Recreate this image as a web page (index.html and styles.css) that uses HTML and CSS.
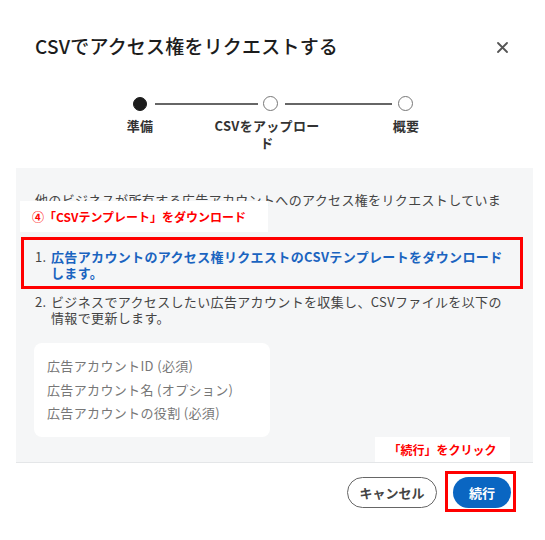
FILE: index.html
```html
<!DOCTYPE html>
<html lang="ja">
  <head>
    <meta charset="UTF-8" />
    <meta name="viewport" content="width=device-width, initial-scale=1.0" />
    <title>CSVでアクセス権をリクエストする</title>
    <link rel="stylesheet" href="styles.css">
  </head>
  <body>
    <div class="modal">
      <header>
        <h1>CSVでアクセス権をリクエストする</h1>
        <button class="close" title="閉じる">
          <svg width="11" height="11" viewBox="0 0 11 11" fill="none" stroke="currentColor" stroke-width="1.8" stroke-linecap="round">
            <path d="M1 1l9 9M10 1l-9 9" />
          </svg>
        </button>
      </header>

      <div class="stepper">
        <div class="track">
          <span class="step-dot active"></span>
          <span class="step-line line-1"></span>
          <span class="step-dot"></span>
          <span class="step-line line-2"></span>
          <span class="step-dot"></span>
        </div>
        <div class="labels">
          <span>準備</span>
          <span>CSVをアップロー<br>ド</span>
          <span>概要</span>
        </div>
      </div>

      <div class="panel">
        <p class="intro">
          他のビジネスが所有する広告アカウントへのアクセス権をリクエストしていま<br>す。次の手順から開始します。
        </p>
        <ol class="steps">
          <li>
            <span class="num">1.</span>
            <a href="#" class="link">広告アカウントのアクセス権リクエストのCSVテンプレートをダウンロード<br>します。</a>
          </li>
          <li>
            <span class="num">2.</span>
            <span>ビジネスでアクセスしたい広告アカウントを収集し、CSVファイルを以下の<br>情報で更新します。</span>
          </li>
        </ol>
        <div class="fields">
          <p>広告アカウントID (必須)</p>
          <p>広告アカウント名 (オプション)</p>
          <p>広告アカウントの役割 (必須)</p>
        </div>
      </div>

      <footer>
        <button class="btn btn-outline">キャンセル</button>
        <button class="btn btn-primary">続行</button>
      </footer>

      <!-- annotations -->
      <div class="note note-1">④「CSVテンプレート」をダウンロード</div>
      <div class="frame frame-1"></div>
      <div class="note note-2">「続行」をクリック</div>
      <div class="frame frame-2"></div>
    </div>
  </body>
</html>
```

FILE: styles.css
```css
* {
  margin: 0;
  padding: 0;
  box-sizing: border-box;
}

body {
  font-family: "Noto Sans CJK JP", "Noto Sans", sans-serif;
  background-color: #fff;
  color: #1c1e21;
  width: 545px;
  height: 540px;
  overflow: hidden;
}

.modal {
  position: relative;
  width: 545px;
  height: 540px;
  padding-top: 34px;
}

header {
  display: flex;
  justify-content: space-between;
  align-items: center;
  padding: 0 36px 0 35px;
}

h1 {
  font-size: 19px;
  line-height: 24px;
  font-weight: 500;
  letter-spacing: 0.2px;
  color: #1c1c1c;
}

.close {
  background: none;
  border: none;
  color: #555;
  width: 12px;
  height: 12px;
  display: flex;
  margin-top: 4px;
}

/* stepper */
.stepper {
  margin-top: 38px;
}

.track {
  display: flex;
  align-items: center;
  padding-left: 133px;
  height: 15px;
}

.step-dot {
  width: 15px;
  height: 15px;
  border-radius: 50%;
  border: 1.5px solid #777;
  background: #fff;
  flex-shrink: 0;
}

.step-dot.active {
  background: #1c1c1c;
  border-color: #1c1c1c;
  width: 14px;
  height: 14px;
}

.step-line {
  height: 2px;
  background: #666;
}

.line-1 {
  width: 103px;
  margin: 0 5px 0 8px;
}

.line-2 {
  width: 107px;
  margin: 0 6px 0 7px;
}

.labels {
  display: grid;
  grid-template-columns: 110px 110px 110px;
  column-gap: 23px;
  padding-left: 85px;
  margin-top: 6px;
  font-size: 13px;
  line-height: 17px;
  font-weight: 700;
  letter-spacing: 0.3px;
  color: #333;
  text-align: center;
}

.labels span:nth-child(2) {
  margin-left: -12px;
}

/* gray body */
.panel {
  margin: 17px 12px 0 16px;
  background-color: #f5f6f7;
  padding: 24px 10px 25px 19px;
  font-size: 13px;
  line-height: 16px;
  letter-spacing: 0.35px;
  color: #444;
  border-bottom: 1px solid #e4e6e8;
}

.steps {
  list-style: none;
  margin-top: 25px;
  display: flex;
  flex-direction: column;
  gap: 13px;
}

.steps li {
  display: flex;
  gap: 4px;
}

.num {
  width: 12px;
  flex-shrink: 0;
}

.link {
  color: #1a64c0;
  font-weight: 700;
  text-decoration: none;
}

.fields {
  margin-top: 17px;
  width: 236px;
  margin-left: -1px;
  background: #fff;
  border-radius: 8px;
  padding: 11px 13px 12px;
  color: #777;
  line-height: 23.5px;
}

footer {
  display: flex;
  justify-content: flex-end;
  gap: 16px;
  padding: 14px 34px 0 0;
}

.btn {
  height: 31px;
  border-radius: 16px;
  font-family: inherit;
  font-size: 13px;
  font-weight: 700;
  cursor: pointer;
}

.btn-outline {
  width: 90px;
  background: #fff;
  border: 1px solid #666;
  color: #444;
}

.btn-primary {
  width: 58px;
  background: #0a66c2;
  border: none;
  color: #fff;
}

/* annotations */
.note {
  position: absolute;
  background: #fff;
  color: #f00;
  font-size: 12px;
  font-weight: 700;
  display: flex;
  align-items: center;
}

.note-1 {
  left: 20px;
  top: 201px;
  width: 248px;
  height: 31px;
  padding-left: 12px;
}

.note-2 {
  left: 375px;
  top: 437px;
  width: 135px;
  height: 25px;
  justify-content: center;
}

.frame {
  position: absolute;
  border: 3px solid #f00;
}

.frame-1 {
  left: 21px;
  top: 237px;
  width: 502px;
  height: 52px;
}

.frame-2 {
  left: 445px;
  top: 471px;
  width: 71px;
  height: 41px;
}
```
